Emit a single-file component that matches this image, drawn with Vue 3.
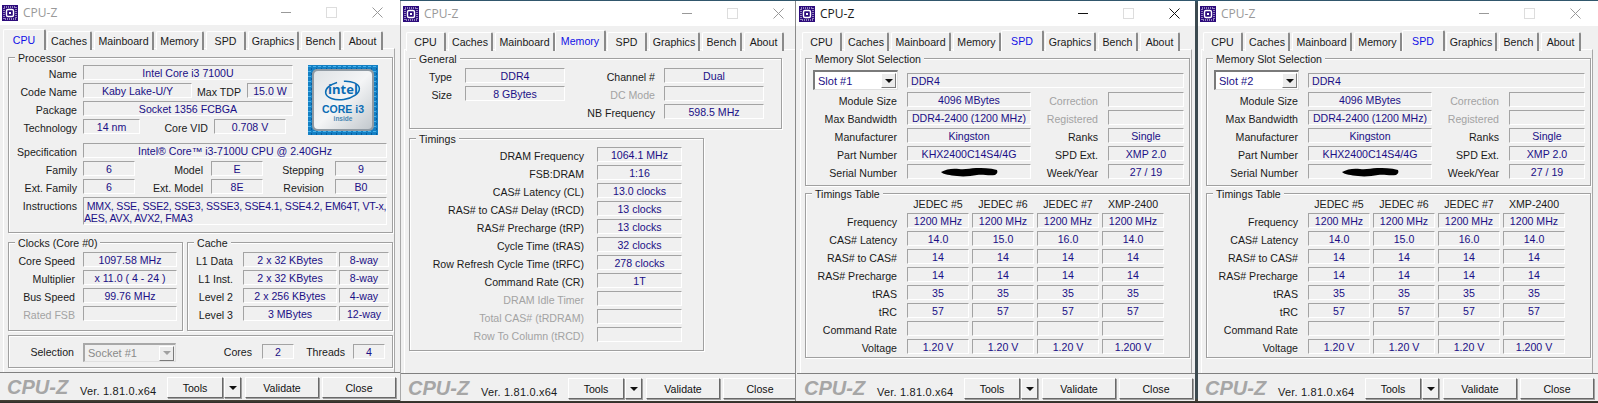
<script setup>
const windows = [
  { id: 1, tab: "CPU", cls: "w1" },
  { id: 2, tab: "Memory", cls: "w2" },
  { id: 3, tab: "SPD", cls: "w3", slot: "Slot #1", focused: true },
  { id: 4, tab: "SPD", cls: "w4", slot: "Slot #2" },
];
const tabs = ["CPU", "Caches", "Mainboard", "Memory", "SPD", "Graphics", "Bench", "About"];

const clocks = [
  { label: "Core Speed", value: "1097.58 MHz" },
  { label: "Multiplier", value: "x 11.0 ( 4 - 24 )" },
  { label: "Bus Speed", value: "99.76 MHz" },
  { label: "Rated FSB", value: "", off: true },
];
const cache = [
  ["L1 Data", "2 x 32 KBytes", "8-way"],
  ["L1 Inst.", "2 x 32 KBytes", "8-way"],
  ["Level 2", "2 x 256 KBytes", "4-way"],
  ["Level 3", "3 MBytes", "12-way"],
];
const timings = [
  { label: "DRAM Frequency", value: "1064.1 MHz" },
  { label: "FSB:DRAM", value: "1:16" },
  { label: "CAS# Latency (CL)", value: "13.0 clocks" },
  { label: "RAS# to CAS# Delay (tRCD)", value: "13 clocks" },
  { label: "RAS# Precharge (tRP)", value: "13 clocks" },
  { label: "Cycle Time (tRAS)", value: "32 clocks" },
  { label: "Row Refresh Cycle Time (tRFC)", value: "278 clocks" },
  { label: "Command Rate (CR)", value: "1T" },
  { label: "DRAM Idle Timer", value: "", off: true },
  { label: "Total CAS# (tRDRAM)", value: "", off: true },
  { label: "Row To Column (tRCD)", value: "", off: true },
];
const spdRows = [
  { left: "Module Size", value: "4096 MBytes", right: "Correction", rv: "", off: true },
  { left: "Max Bandwidth", value: "DDR4-2400 (1200 MHz)", right: "Registered", rv: "", off: true },
  { left: "Manufacturer", value: "Kingston", right: "Ranks", rv: "Single" },
  { left: "Part Number", value: "KHX2400C14S4/4G", right: "SPD Ext.", rv: "XMP 2.0" },
  { left: "Serial Number", value: "", hidden: true, right: "Week/Year", rv: "27 / 19" },
];
const jedec = ["JEDEC #5", "JEDEC #6", "JEDEC #7", "XMP-2400"];
const table = [
  ["Frequency", "1200 MHz", "1200 MHz", "1200 MHz", "1200 MHz"],
  ["CAS# Latency", "14.0", "15.0", "16.0", "14.0"],
  ["RAS# to CAS#", "14", "14", "14", "14"],
  ["RAS# Precharge", "14", "14", "14", "14"],
  ["tRAS", "35", "35", "35", "35"],
  ["tRC", "57", "57", "57", "57"],
  ["Command Rate", "", "", "", ""],
  ["Voltage", "1.20 V", "1.20 V", "1.20 V", "1.200 V"],
];
</script>

<template>
  <div class="desktop">
    <div v-for="win in windows" :key="win.id" class="window" :class="[win.cls, { focused: win.focused }]">
      <div class="titlebar">
        <svg class="appicon" width="16" height="16" viewBox="0 0 16 16">
          <rect width="16" height="16" fill="#2c0b7c" />
          <path d="M2 2h12v12H2z" fill="none" stroke="#fff" stroke-width="1" stroke-dasharray="1 1" />
          <rect x="4.5" y="4.5" width="7" height="7" rx="1.5" fill="none" stroke="#fff" stroke-width="1.4" />
          <rect x="7" y="7" width="2" height="2" fill="#fff" />
        </svg>
        <span class="apptitle">CPU-Z</span>
        <span class="wbtn min"></span>
        <span class="wbtn max"></span>
        <svg class="wbtn close" width="11" height="11" viewBox="0 0 11 11">
          <path d="M0.5 0.5l10 10M10.5 0.5l-10 10" fill="none" stroke="currentColor" stroke-width="1" />
        </svg>
      </div>

      <div class="tabs">
        <div v-for="t in tabs" :key="t" class="tab" :class="{ active: t === win.tab }">{{ t }}</div>
      </div>

      <div class="panel">
        <!-- CPU tab -->
        <template v-if="win.tab === 'CPU'">
          <section class="group processor">
            <span class="legend">Processor</span>
            <div class="topblock">
              <div class="toprows">
                <div class="row r-full"><span class="lab">Name</span><span class="fld">Intel Core i3 7100U</span></div>
                <div class="row r-code">
                  <span class="lab">Code Name</span><span class="fld">Kaby Lake-U/Y</span>
                  <span class="lab">Max TDP</span><span class="fld">15.0 W</span>
                </div>
                <div class="row r-full"><span class="lab">Package</span><span class="fld">Socket 1356 FCBGA</span></div>
                <div class="row r-tech">
                  <span class="lab">Technology</span><span class="fld">14 nm</span>
                  <span class="lab">Core VID</span><span class="fld">0.708 V</span>
                </div>
              </div>
              <svg class="intel" width="70" height="70" viewBox="0 0 70 70">
                <defs>
                  <pattern id="circuit" width="5" height="5" patternUnits="userSpaceOnUse">
                    <rect width="5" height="5" fill="#1580c4" />
                    <rect x="0" y="1" width="3" height="1" fill="#4ab4ec" />
                    <rect x="3" y="3" width="1" height="2" fill="#0a5c9c" />
                  </pattern>
                  <linearGradient id="chip" x1="0" y1="0" x2="1" y2="1">
                    <stop offset="0" stop-color="#dfe3e6" />
                    <stop offset="0.5" stop-color="#f4f5f6" />
                    <stop offset="1" stop-color="#c2c8cd" />
                  </linearGradient>
                </defs>
                <rect width="70" height="70" fill="url(#circuit)" />
                <rect x="4" y="4" width="62" height="62" rx="5" fill="#8f9aa3" />
                <rect x="6" y="6" width="58" height="58" rx="4" fill="url(#chip)" />
                <ellipse cx="34.5" cy="25.5" rx="17" ry="9" fill="none" stroke="#0a6cb4" stroke-width="1.5" stroke-dasharray="58 7" transform="rotate(-8 34.5 25.5)" />
                <text x="35" y="29" class="intel-word">intel</text>
                <text x="35" y="48" class="intel-core">CORE i3</text>
                <text x="35" y="56" class="intel-in">inside</text>
              </svg>
            </div>
            <div class="row r-wide"><span class="lab">Specification</span><span class="fld">Intel® Core™ i3-7100U CPU @ 2.40GHz</span></div>
            <div class="row r-fam">
              <span class="lab">Family</span><span class="fld">6</span>
              <span class="lab p8">Model</span><span class="fld">E</span>
              <span class="lab p11">Stepping</span><span class="fld">9</span>
            </div>
            <div class="row r-fam">
              <span class="lab">Ext. Family</span><span class="fld">6</span>
              <span class="lab p8">Ext. Model</span><span class="fld">8E</span>
              <span class="lab p11">Revision</span><span class="fld">B0</span>
            </div>
            <div class="row r-wide instr">
              <span class="lab">Instructions</span>
              <span class="fld multi">&nbsp;MMX, SSE, SSE2, SSE3, SSSE3, SSE4.1, SSE4.2, EM64T, VT-x,<br>AES, AVX, AVX2, FMA3</span>
            </div>
          </section>

          <div class="split">
            <section class="group clocks">
              <span class="legend">Clocks (Core #0)</span>
              <div v-for="c in clocks" :key="c.label" class="row r-clock">
                <span class="lab p8" :class="{ off: c.off }">{{ c.label }}</span><span class="fld">{{ c.value }}</span>
              </div>
            </section>
            <section class="group cache">
              <span class="legend">Cache</span>
              <div v-for="c in cache" :key="c[0]" class="row r-cache">
                <span class="lab p8">{{ c[0] }}</span><span class="fld">{{ c[1] }}</span><span class="fld">{{ c[2] }}</span>
              </div>
            </section>
          </div>

          <section class="group selection">
            <span class="lab sel-lab">Selection</span>
            <div class="select disabled">
              <span>Socket #1</span>
              <span class="arrow"><i></i></span>
            </div>
            <span class="lab cores-lab">Cores</span><span class="fld small">2</span>
            <span class="lab threads-lab">Threads</span><span class="fld small">4</span>
          </section>
        </template>

        <!-- Memory tab -->
        <template v-else-if="win.tab === 'Memory'">
          <section class="group general">
            <span class="legend">General</span>
            <div class="row r-gen">
              <span class="lab p13">Type</span><span class="fld">DDR4</span>
              <span class="lab p9">Channel #</span><span class="fld">Dual</span>
            </div>
            <div class="row r-gen">
              <span class="lab p13">Size</span><span class="fld">8 GBytes</span>
              <span class="lab p9 off">DC Mode</span><span class="fld"></span>
            </div>
            <div class="row r-gen">
              <span class="lab p13"></span><span></span>
              <span class="lab p9">NB Frequency</span><span class="fld">598.5 MHz</span>
            </div>
          </section>
          <section class="group timings">
            <span class="legend">Timings</span>
            <div v-for="t in timings" :key="t.label" class="row r-timing">
              <span class="lab p13" :class="{ off: t.off }">{{ t.label }}</span><span class="fld">{{ t.value }}</span>
            </div>
          </section>
        </template>

        <!-- SPD tab -->
        <template v-else>
          <section class="group slotsel">
            <span class="legend">Memory Slot Selection</span>
            <div class="slotrow">
              <div class="select">
                <span>{{ win.slot }}</span>
                <span class="arrow"><i></i></span>
              </div>
              <span class="fld ddr">DDR4</span>
            </div>
            <div v-for="r in spdRows" :key="r.left" class="row r-spd">
              <span class="lab p10">{{ r.left }}</span>
              <span class="fld">
                <svg v-if="r.hidden" width="58" height="10" viewBox="0 0 58 10">
                  <path d="M1 5c5-3 12-4 18-3s11-1 17-1 14 0 21 2c1 2 0 4-2 5-7 1-12-1-18 0s-13 2-20 1S4 8 1 5z" fill="#000" />
                </svg>
                <template v-else>{{ r.value }}</template>
              </span>
              <span class="lab p10" :class="{ off: r.off }">{{ r.right }}</span>
              <span class="fld">{{ r.rv }}</span>
            </div>
          </section>
          <section class="group tabletim">
            <span class="legend">Timings Table</span>
            <div class="row r-table head">
              <span></span>
              <span v-for="j in jedec" :key="j" class="colhead">{{ j }}</span>
            </div>
            <div v-for="r in table" :key="r[0]" class="row r-table">
              <span class="lab p7">{{ r[0] }}</span>
              <span v-for="(v, i) in r.slice(1)" :key="i" class="fld">{{ v }}</span>
            </div>
          </section>
        </template>
      </div>

      <div class="footer">
        <span class="brand">CPU-Z</span>
        <span class="ver">Ver. 1.81.0.x64</span>
        <button class="btn tools">Tools</button>
        <button class="btn drop"><i></i></button>
        <button class="btn validate">Validate</button>
        <button class="btn closebtn">Close</button>
      </div>
    </div>
  </div>
</template>

<style>
html, body {
  margin: 0;
  background: #3c3f3a;
}
</style>

<style scoped>
.desktop {
  display: flex;
  width: 1598px;
  height: 403px;
  overflow: hidden;
  background: linear-gradient(#2f5870 0, #3c4a50 4px, #3c4a50 398px, #4a4438 400px, #2e2c28 403px);
  font-family: "Liberation Sans", Arial, sans-serif;
  font-size: 10.6px;
  color: #1a1a1a;
}
.window {
  width: 400px;
  height: 400px;
  flex: none;
  overflow: hidden;
  background: #f0f0f0;
  box-sizing: border-box;
  position: relative;
}
.w2 {
  width: 395px;
  margin-top: 1px;
  border-left: 1px solid #a8a8a8;
}
.w3 {
  margin-top: 1px;
  padding-left: 1px;
  border-left: 1px solid #8a8a8a;
}
.w4 {
  margin-top: 1px;
  margin-left: 3px;
}

/* title bar */
.titlebar {
  height: 25px;
  width: 400px;
  margin-left: -2px;
  padding-left: 4px;
  box-sizing: border-box;
  background: #fff;
  display: flex;
  align-items: center;
}
.w1 .titlebar, .w4 .titlebar { margin-left: 0; padding-left: 2px; }
.appicon {
  flex: none;
}
.apptitle {
  width: 100px;
  margin-left: 5px;
  font-family: "Open Sans", sans-serif;
  font-size: 12px;
  color: #999;
  flex: none;
}
.focused .apptitle { color: #1a1a1a; }
.wbtn {
  display: block;
  flex: none;
}
.min {
  width: 10px;
  height: 1px;
  margin-left: 158px;
  background: #999;
}
.max {
  width: 9px;
  height: 9px;
  margin-left: 35px;
  border: 1px solid #ddd;
}
.close {
  margin-left: 35px;
  color: #999;
}
.focused .min { background: #111; }
.focused .close { color: #111; }

/* tabs */
.tabs {
  height: 24px;
  padding: 6px 0 0 5px;
  box-sizing: border-box;
  display: grid;
  grid-template-columns: 40px 45px 60px 48px 40px 51px 40px 40px;
  column-gap: 2px;
  position: relative;
  z-index: 1;
  margin-bottom: -1px;
}
.tab {
  border-top: 1px solid #fff;
  border-left: 1px solid #fff;
  border-right: 2px solid #8a8a8a;
  border-radius: 2px 2px 0 0;
  text-align: center;
  line-height: 18px;
  background: #f0f0f0;
  box-sizing: border-box;
}
.tab.active {
  margin: -2px -1px 0 -2px;
  color: #1010e6;
  line-height: 20px;
}

/* main panel */
.panel {
  height: 324px;
  width: 392px;
  margin-left: 3px;
  padding-left: 4px;
  box-sizing: border-box;
  border-top: 1px solid #fff;
  border-left: 1px solid #fff;
  border-right: 1px solid #a8a8a8;
  overflow: hidden;
  padding-top: 8px;
}

.group {
  position: relative;
  border: 1px solid #a0a0a0;
  box-shadow: inset 1px 1px 0 #fff, 1px 1px 0 #fff;
  box-sizing: border-box;
  width: 385px;
}
.legend {
  position: absolute;
  top: -7px;
  left: 6px;
  padding: 0 3px;
  background: #f0f0f0;
  line-height: 14px;
}

.row {
  display: grid;
  height: 15px;
  margin-bottom: 3px;
}
.lab {
  text-align: right;
  padding-right: 6px;
  line-height: 18px;
  white-space: nowrap;
  box-sizing: border-box;
}
.lab.p7 { padding-right: 7px; }
.lab.p8 { padding-right: 8px; }
.lab.p9 { padding-right: 9px; }
.lab.p10 { padding-right: 10px; }
.lab.p11 { padding-right: 11px; }
.lab.p13 { padding-right: 13px; }
.off { color: #a3a3a3; }
.fld {
  display: block;
  height: 15px;
  box-sizing: border-box;
  border-top: 1px solid #a3a3a3;
  border-left: 1px solid #a3a3a3;
  border-right: 1px solid #fff;
  border-bottom: 1px solid #fff;
  text-align: center;
  line-height: 14px;
  color: #1a0f86;
  white-space: nowrap;
}

/* processor */
.processor {
  height: 176px;
  padding-top: 7px;
}
.topblock {
  display: flex;
  height: 78px;
}
.toprows { width: 284px; }
.intel {
  display: block;
  margin-left: 15px;
  flex: none;
}
.intel-word {
  font: bold 13px "Open Sans", sans-serif;
  fill: #0a6cb4;
  text-anchor: middle;
}
.intel-core {
  font: bold 10.5px "Liberation Sans", sans-serif;
  fill: #0a6cb4;
  text-anchor: middle;
}
.intel-in {
  font: bold 6.5px "Liberation Sans", sans-serif;
  fill: #4a86b2;
  text-anchor: middle;
}
.r-full { grid-template-columns: 74px 210px; }
.r-code { grid-template-columns: 74px 109px 55px 46px; }
.r-tech { grid-template-columns: 74px 57px 74px 72px; }
.r-wide { grid-template-columns: 74px 304px; }
.r-fam { grid-template-columns: 74px 52px 76px 52px 72px 52px; }
.instr { height: 28px; }
.multi {
  height: 28px;
  padding-top: 2px;
  text-align: left;
  line-height: 12px;
  letter-spacing: -0.2px;
}

/* clocks + cache */
.split {
  display: flex;
  gap: 4px;
  margin-top: 9px;
}
.clocks {
  width: 175px;
  height: 89px;
  padding-top: 9px;
}
.cache {
  width: 206px;
  height: 89px;
  padding-top: 9px;
}
.r-clock { grid-template-columns: 74px 94px; }
.r-cache { grid-template-columns: 53px 94px 50px; column-gap: 2px; }

/* selection */
.selection {
  display: flex;
  margin-top: 4px;
  height: 33px;
  padding-top: 7px;
}
.sel-lab { width: 74px; padding-right: 9px; line-height: 18px; }
.cores-lab { width: 86px; padding-right: 10px; line-height: 18px; }
.threads-lab { width: 59px; padding-right: 8px; line-height: 18px; }
.small { width: 32px; margin-top: 1px; }

.select {
  width: 93px;
  height: 19px;
  box-sizing: border-box;
  display: flex;
  align-items: center;
  justify-content: space-between;
  padding-left: 3px;
  background: #fff;
  border-top: 2px solid #7a7a7a;
  border-left: 2px solid #7a7a7a;
  border-right: 1px solid #e0e0e0;
  border-bottom: 1px solid #e0e0e0;
  color: #1a0f86;
  font-size: 11px;
}
.select.disabled {
  background: #f0f0f0;
  color: #8a8a8a;
  border-top-color: #a8a8a8;
  border-left-color: #a8a8a8;
}
.arrow {
  width: 15px;
  height: 15px;
  background: #ececec;
  border: 1px solid #fff;
  border-right-color: #7a7a7a;
  border-bottom-color: #7a7a7a;
  box-sizing: border-box;
  display: flex;
  align-items: center;
  justify-content: center;
  margin-right: 1px;
}
.arrow i, .drop i {
  display: block;
  width: 0;
  height: 0;
  border-left: 4px solid transparent;
  border-right: 4px solid transparent;
  border-top: 4px solid #111;
}
.disabled .arrow i { border-top-color: #a0a0a0; }

/* memory */
.general {
  width: 373px;
  height: 71px;
  padding-top: 9px;
}
.timings {
  width: 295px;
  height: 213px;
  margin-top: 9px;
  padding-top: 8px;
}
.r-gen { grid-template-columns: 55px 100px 99px 100px; }
.r-timing { grid-template-columns: 187px 85px; }

/* spd */
.slotsel {
  height: 128px;
  padding-top: 11px;
}
.slotrow {
  display: flex;
  height: 20px;
  margin-bottom: 2px;
  padding-left: 7px;
  align-items: center;
}
.slotrow .select {
  width: 85px;
  height: 20px;
}
.ddr {
  width: 277px;
  margin-left: 9px;
  text-align: left;
  padding-left: 3px;
}
.r-spd { grid-template-columns: 101px 124px 77px 76px; }
.r-spd svg { display: block; margin: 2px auto 0; }
.tabletim {
  height: 165px;
  margin-top: 7px;
  padding-top: 3px;
}
.r-table {
  grid-template-columns: 98px 62px 62px 62px 62px;
  column-gap: 3px;
}
.head { margin-bottom: 1px; }
.colhead {
  text-align: center;
  line-height: 15px;
  white-space: nowrap;
}

/* footer */
.footer {
  height: 28px;
  width: 400px;
  box-sizing: border-box;
  border-top: 1px solid #808080;
  padding: 4px 0 0 7px;
  display: flex;
  align-items: flex-start;
}
.brand {
  width: 73px;
  font: italic bold 20px/21px "Liberation Sans", sans-serif;
  color: #a6a6a6;
  flex: none;
}
.ver {
  width: 87px;
  flex: none;
  font-size: 11px;
  line-height: 22px;
  padding-top: 3px;
  letter-spacing: 0.2px;
}
.btn {
  height: 21px;
  padding: 0;
  flex: none;
  background: #f0f0f0;
  border: 1px solid #fff;
  border-right-color: #696969;
  border-bottom-color: #696969;
  box-shadow: 1px 1px 0 #a0a0a0;
  font: 10.6px "Liberation Sans", sans-serif;
  color: #111;
}
.tools { width: 56px; }
.drop {
  width: 17px;
  margin-left: 1px;
  display: flex;
  align-items: center;
  justify-content: center;
}
.validate { width: 74px; margin-left: 4px; }
.closebtn { width: 74px; margin-left: 3px; }
</style>
